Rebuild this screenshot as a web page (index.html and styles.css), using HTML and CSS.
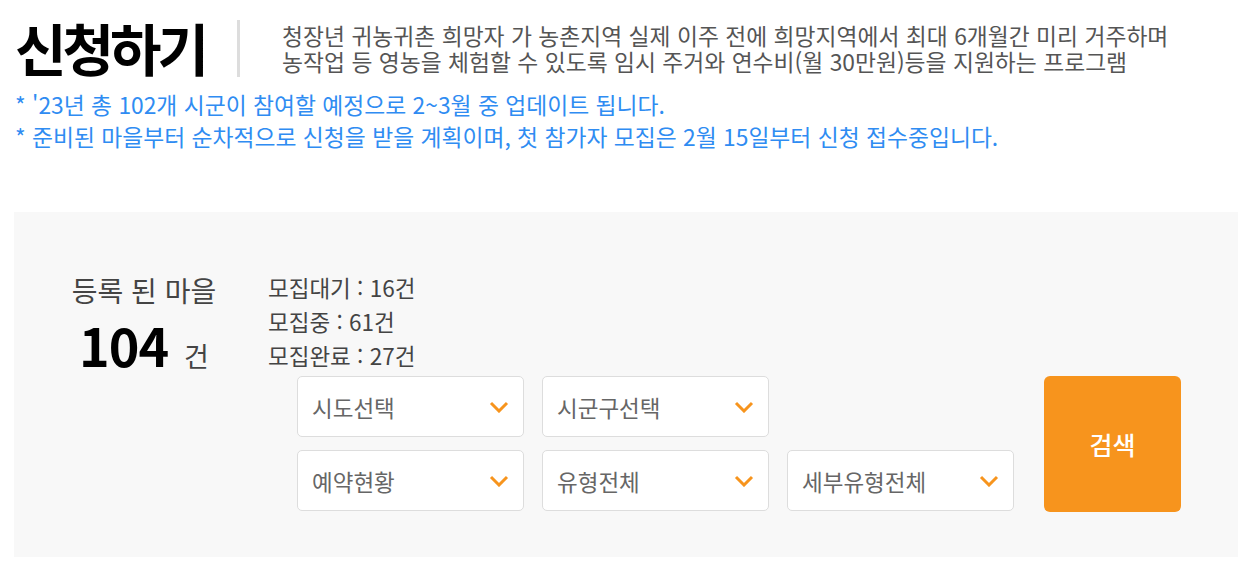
FILE: index.html
```html
<!DOCTYPE html>
<html lang="ko">
<head>
<meta charset="utf-8">
<link rel="stylesheet" href="styles.css">
</head>
<body>
<div class="page">
  <header class="head">
    <h1 class="title">신청하기</h1>
    <span class="divider"></span>
    <p class="desc">청장년 귀농귀촌 희망자 가 농촌지역 실제 이주 전에 희망지역에서 최대 6개월간 미리 거주하며<br>농작업 등 영농을 체험할 수 있도록 임시 주거와 연수비(월 30만원)등을 지원하는 프로그램</p>
  </header>
  <div class="notes">
    <p>* '23년 총 102개 시군이 참여할 예정으로 2~3월 중 업데이트 됩니다.</p>
    <p>* 준비된 마을부터 순차적으로 신청을 받을 계획이며, 첫 참가자 모집은 2월 15일부터 신청 접수중입니다.</p>
  </div>
  <section class="panel">
    <div class="stats">
      <div class="total">
        <div class="total-label">등록 된 마을</div>
        <div class="total-value"><strong>104</strong><span>건</span></div>
      </div>
      <ul class="status">
        <li>모집대기 : 16건</li>
        <li>모집중 : 61건</li>
        <li>모집완료 : 27건</li>
      </ul>
    </div>
    <div class="filters">
      <div class="selects">
        <div class="select">시도선택<svg class="chev" viewBox="0 0 20 12"><path d="M2 2 L10 10 L18 2"/></svg></div>
        <div class="select">시군구선택<svg class="chev" viewBox="0 0 20 12"><path d="M2 2 L10 10 L18 2"/></svg></div>
        <div class="select empty"></div>
        <div class="select">예약현황<svg class="chev" viewBox="0 0 20 12"><path d="M2 2 L10 10 L18 2"/></svg></div>
        <div class="select">유형전체<svg class="chev" viewBox="0 0 20 12"><path d="M2 2 L10 10 L18 2"/></svg></div>
        <div class="select">세부유형전체<svg class="chev" viewBox="0 0 20 12"><path d="M2 2 L10 10 L18 2"/></svg></div>
      </div>
      <button class="search">검색</button>
    </div>
  </section>
</div>
</body>
</html>
```
FILE: styles.css
```css
* { box-sizing: border-box; }
html, body { margin: 0; padding: 0; background: #fff; }
body { font-family: "Noto Sans CJK KR", "Noto Sans", sans-serif; color: #333; }
.page { padding: 0 10px 0 14px; }
.head { display: flex; align-items: flex-start; padding-top: 11px; }
.title { margin: 0; font-size: 56px; font-weight: 700; line-height: 72px; letter-spacing: -4px; color: #000; padding-left: 1px; }
.divider { width: 3px; height: 57px; background: #ddd; margin: 9px 42px 0 32px; }
.desc { margin: 12px 0 0; font-size: 22.8px; line-height: 26px; color: #555; }
.notes { margin-top: 6px; padding-left: 1px; }
.notes p { margin: 0; font-size: 22.8px; line-height: 32px; color: #2f8cf2; }
.panel { margin-top: 59px; background: #f8f8f8; height: 345px; width: 1224px; padding-top: 57px; }
.stats { display: flex; align-items: flex-start; }
.total { width: 260px; text-align: center; }
.total-label { font-size: 28px; line-height: 42px; color: #444; }
.total-value { line-height: 68px; }
.total-value strong { font-size: 52px; font-weight: 700; color: #000; letter-spacing: -1px; }
.total-value span { font-size: 27px; color: #444; margin-left: 16px; }
.status { list-style: none; margin: 1px 0 0 -6px; padding: 0; }
.status li { font-size: 22.5px; line-height: 34px; color: #444; letter-spacing: 0; }
.filters { display: flex; margin-left: 283px; margin-top: -18px; }
.selects { display: grid; grid-template-columns: repeat(3, 227px); grid-auto-rows: 61px; column-gap: 18px; row-gap: 13px; }
.select { background: #fff; border: 1px solid #ddd; border-radius: 5px; display: flex; align-items: center; justify-content: space-between; padding: 0 14px 0 14px; font-size: 22.5px; color: #666; }
.select.empty { visibility: hidden; }
.chev { width: 20px; height: 12px; fill: none; stroke: #f7941d; stroke-width: 3; }
.search { margin-left: 30px; width: 137px; height: 136px; background: #f7941d; border: 0; border-radius: 6px; color: #fff; font-family: inherit; font-size: 25px; font-weight: 500; }
```
